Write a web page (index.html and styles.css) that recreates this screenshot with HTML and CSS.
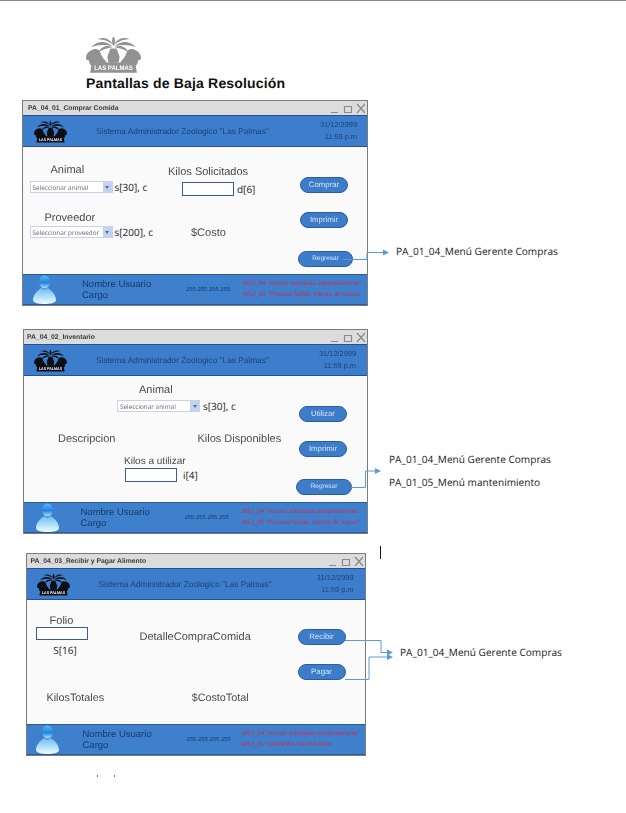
FILE: index.html
```html
<!DOCTYPE html>
<html lang="es">
<head>
    <meta charset="UTF-8">
    <meta name="viewport" content="width=device-width, initial-scale=1.0">
    <title>Pantallas de Baja Resolución</title>
    <link rel="stylesheet" href="styles.css">
</head>
<body>
    <svg width="0" height="0" class="defs">
        <defs>
            <linearGradient id="body-grad" x1="0" y1="0" x2="0" y2="1">
                <stop offset="0" stop-color="#6dbcf2"/>
                <stop offset="0.5" stop-color="#a9def9"/>
                <stop offset="1" stop-color="#f0fbff"/>
            </linearGradient>
            <linearGradient id="head-grad" x1="0" y1="0" x2="0" y2="1">
                <stop offset="0" stop-color="#62b6f2"/>
                <stop offset="0.55" stop-color="#1f84e0"/>
                <stop offset="1" stop-color="#b4e8fc"/>
            </linearGradient>
            <g id="logo-half">
                <path d="M27 9C24 3 18 0 11 3c6 0 12 2 16 6z"/>
                <path d="M26 10C20 4 11 4 5 11c7-3 14-3 21-1z"/>
                <path d="M26 11C21 8 15 10 12 16c4-3 9-4 14-5z"/>
                <path d="M0 22c0-4 2-7 5-8 2-2 6-2 8 0 2 3 2 6 5 9 2 2 3 4 3 6H5c-2-2-2-4-2-5-1 0-3-1-3-2z"/>
            </g>
            <symbol id="logo" viewBox="0 0 54 36">
                <use href="#logo-half"/>
                <use href="#logo-half" transform="matrix(-1 0 0 1 54 0)"/>
                <path d="M27 10c-2-4-2-7 0-10 2 3 2 6 0 10z"/>
                <path d="M24 12h6l3 8-1 6H22l-1-6z"/>
                <path d="M6 25c7 1 35 1 42 0l2 11H4z"/>
                <text x="27" y="33.5" text-anchor="middle" textLength="38" lengthAdjust="spacingAndGlyphs" font-family="Liberation Sans, sans-serif" font-size="6.5" font-weight="bold" fill="#fff" stroke="none">LAS PALMAS</text>
            </symbol>
            <symbol id="user" viewBox="0 0 23 29">
                <path d="M8 13C4 16 0 20 0 25c0 3 6 4 11.5 4S23 28 23 25c0-5-4-9-8-12l-3.5 2z" fill="url(#body-grad)"/>
                <ellipse cx="11.5" cy="7" rx="5.5" ry="6.5" fill="url(#head-grad)"/>
            </symbol>
        </defs>
    </svg>

    <header class="doc-head">
        <svg class="doc-logo"><use href="#logo"/></svg>
        <h1>Pantallas de Baja Resolución</h1>
    </header>

    <!-- PA_04_01 -->
    <section class="win win-1">
        <div class="win-title">
            <span>PA_04_01_Comprar Comida</span>
            <div class="win-ctrl">
                <svg width="34" height="11" viewBox="0 0 34 11"><path d="M0 9.5h7M13.5 3.5h7v6h-7zM26 1l8 9M34 1l-8 9"/></svg>
            </div>
        </div>
        <div class="win-head">
            <svg class="head-logo"><use href="#logo"/></svg>
            <p class="head-name">Sistema Administrador Zoologico "Las Palmas"</p>
            <div class="head-date"><span>31/12/2999</span><span>11:59 p.m</span></div>
        </div>
        <div class="win-body body-1">
            <div class="col-a">
                <p class="lbl lbl-animal">Animal</p>
                <div class="field"><div class="sel"><span>Seleccionar animal</span><i></i></div><span class="note">s[30], c</span></div>
                <p class="lbl lbl-prov">Proveedor</p>
                <div class="field"><div class="sel"><span>Seleccionar proveedor</span><i></i></div><span class="note">s[200], c</span></div>
            </div>
            <div class="col-b">
                <p class="lbl">Kilos Solicitados</p>
                <div class="field field-kilos"><div class="inp"></div><span class="note">d[6]</span></div>
                <p class="lbl lbl-costo">$Costo</p>
            </div>
            <div class="col-c">
                <a class="btn">Comprar</a>
                <a class="btn">Imprimir</a>
                <a class="btn btn-back">Regresar</a>
            </div>
        </div>
        <div class="win-foot">
            <svg class="foot-icon"><use href="#user"/></svg>
            <div class="foot-user"><span>Nombre Usuario</span><span>Cargo</span></div>
            <span class="foot-ip">255.255.255.255</span>
            <div class="foot-msg"><span>MSJ_04 "Accion solicitada completamente"</span><span>MSJ_05 "Proceso fallido, intente de nuevo"</span></div>
        </div>
    </section>

    <!-- PA_04_02 -->
    <section class="win win-2">
        <div class="win-title">
            <span>PA_04_02_Inventario</span>
            <div class="win-ctrl">
                <svg width="34" height="11" viewBox="0 0 34 11"><path d="M0 9.5h7M13.5 3.5h7v6h-7zM26 1l8 9M34 1l-8 9"/></svg>
            </div>
        </div>
        <div class="win-head">
            <svg class="head-logo"><use href="#logo"/></svg>
            <p class="head-name">Sistema Administrador Zoologico "Las Palmas"</p>
            <div class="head-date"><span>31/12/2999</span><span>11:59 p.m</span></div>
        </div>
        <div class="win-body body-2">
            <div class="col-main">
                <p class="lbl lbl-animal2">Animal</p>
                <div class="field field-animal2"><div class="sel"><span>Seleccionar animal</span><i></i></div><span class="note">s[30], c</span></div>
                <div class="row-desc"><p class="lbl">Descripcion</p><p class="lbl">Kilos Disponibles</p></div>
                <p class="lbl lbl-util">Kilos a utilizar</p>
                <div class="field field-util"><div class="inp"></div><span class="note">i[4]</span></div>
            </div>
            <div class="col-c">
                <a class="btn">Utilizar</a>
                <a class="btn">Imprimir</a>
                <a class="btn btn-back">Regresar</a>
            </div>
        </div>
        <div class="win-foot">
            <svg class="foot-icon"><use href="#user"/></svg>
            <div class="foot-user"><span>Nombre Usuario</span><span>Cargo</span></div>
            <span class="foot-ip">255.255.255.255</span>
            <div class="foot-msg"><span>MSJ_04 "Accion solicitada completamente"</span><span>MSJ_05 "Proceso fallido, intente de nuevo"</span></div>
        </div>
    </section>

    <!-- PA_04_03 -->
    <section class="win win-3">
        <div class="win-title">
            <span>PA_04_03_Recibir y Pagar Alimento</span>
            <div class="win-ctrl">
                <svg width="34" height="11" viewBox="0 0 34 11"><path d="M0 9.5h7M13.5 3.5h7v6h-7zM26 1l8 9M34 1l-8 9"/></svg>
            </div>
        </div>
        <div class="win-head">
            <svg class="head-logo"><use href="#logo"/></svg>
            <p class="head-name">Sistema Administrador Zoologico "Las Palmas"</p>
            <div class="head-date"><span>31/12/2999</span><span>11:59 p.m</span></div>
        </div>
        <div class="win-body body-3">
            <div class="col-main">
                <div class="row-folio">
                    <div class="folio">
                        <p class="lbl">Folio</p>
                        <div class="inp"></div>
                        <span class="note">S[16]</span>
                    </div>
                    <p class="lbl lbl-detalle">DetalleCompraComida</p>
                </div>
                <div class="row-totales"><p class="lbl">KilosTotales</p><p class="lbl">$CostoTotal</p></div>
            </div>
            <div class="col-c">
                <a class="btn">Recibir</a>
                <a class="btn">Pagar</a>
            </div>
        </div>
        <div class="win-foot">
            <svg class="foot-icon"><use href="#user"/></svg>
            <div class="foot-user"><span>Nombre Usuario</span><span>Cargo</span></div>
            <span class="foot-ip">255.255.255.255</span>
            <div class="foot-msg"><span>MSJ_04 "Accion solicitada completamente"</span><span>MSJ_11 "COMPRA YA PAGADA"</span></div>
        </div>
    </section>

    <!-- flechas hacia los menus -->
    <svg class="arrows" width="626" height="813" viewBox="0 0 626 813">
        <path d="M343 259.5h24v-7h17"/>
        <path d="M389 252.5l-6-3v6z" class="head"/>
        <path d="M351 487.5h14.5v-16.5h10"/>
        <path d="M381 471l-6-3v6z" class="head"/>
        <path d="M345 640.5h36v12h7"/>
        <path d="M393 652.5l-6-3v6z" class="head"/>
        <path d="M345 679.5h24v-22.5h19"/>
        <path d="M393 657l-6-3v6z" class="head"/>
    </svg>

    <p class="link link-1">PA_01_04_Menú Gerente Compras</p>
    <p class="link link-2">PA_01_04_Menú Gerente Compras</p>
    <p class="link link-3">PA_01_05_Menú mantenimiento</p>
    <p class="link link-4">PA_01_04_Menú Gerente Compras</p>

    <div class="cursor"></div>
    <div class="tick tick-1"></div>
    <div class="tick tick-2"></div>
</body>
</html>
```

FILE: styles.css
```css
* {
    margin: 0;
    padding: 0;
    box-sizing: border-box;
}

html, body {
    width: 626px;
    height: 813px;
    overflow: hidden;
}

body {
    position: relative;
    background-color: #fff;
    border-top: 1px solid #8a8a8a;
    font-family: "Liberation Sans", Arial, sans-serif;
    color: #444;
    text-rendering: geometricPrecision;
}

.defs {
    position: absolute;
}

.doc-head {
    height: 99px;
    padding: 35px 0 0 86px;
}

.doc-logo {
    display: block;
    width: 55px;
    height: 37px;
    fill: #929292;
    filter: blur(0.4px);
}

.doc-head h1 {
    font-size: 14px;
    line-height: 16px;
    margin-top: 2px;
    letter-spacing: 0.17px;
    color: #111;
}

/* ventana */
.win {
    display: flex;
    flex-direction: column;
    border: 1px solid #7b7b7b;
    border-width: 1px 1.5px;
}

.win-1 {
    width: 346px;
    height: 206px;
    margin-left: 22px;
}

.win-2 {
    width: 345px;
    height: 205px;
    margin: 23px 0 0 23px;
}

.win-3 {
    width: 340px;
    height: 203px;
    margin: 19px 0 0 25.5px;
}

.win-title, .win-head, .win-foot, .lbl, .sel, .btn {
    filter: blur(0.3px);
}

.win-title {
    flex: none;
    height: 14px;
    display: flex;
    justify-content: space-between;
    align-items: center;
    padding: 0 2px 0 5px;
    background-color: #dcdcdc;
    font-size: 6.8px;
    font-weight: bold;
    color: #3a3a3a;
}

.win-2 .win-title {
    padding-left: 3px;
}

.win-3 .win-title {
    padding-left: 4px;
}

.win-ctrl svg {
    display: block;
    fill: none;
    stroke: #8a8a8a;
    stroke-width: 1.2;
}

.win-head {
    flex: none;
    height: 32px;
    display: flex;
    align-items: center;
    padding: 0 10px 0 11px;
    background-color: #3c7ecb;
    border: 1px solid #2a4f9a;
    border-width: 1px 0;
}

.win-2 .win-head, .win-3 .win-head {
    padding: 0 11px 0 10px;
}

.head-logo {
    flex: none;
    width: 33px;
    height: 25px;
    fill: #0d0d12;
}

.head-name {
    margin-left: 29px;
    font-size: 8.3px;
    color: #1b4274;
    white-space: nowrap;
}

.head-date {
    margin-left: auto;
    display: flex;
    flex-direction: column;
    align-items: flex-end;
    gap: 4.5px;
    font-size: 7.4px;
    line-height: 8px;
    color: #1b4274;
}

.win-body {
    flex: 1;
    display: flex;
    background-color: #fafafa;
}

.win-foot {
    flex: none;
    height: 31px;
    display: flex;
    align-items: center;
    padding: 0 0 0 10px;
    background-color: #3f80cc;
    border: 1px solid #2a5aa0;
    border-width: 1px 0 1.5px;
}

.win-2 .win-foot {
    padding-left: 11.5px;
}

.win-3 .win-foot {
    padding-left: 9px;
}

.foot-icon {
    flex: none;
    width: 23px;
    height: 29px;
}

.foot-user {
    width: 104px;
    margin-left: 26px;
    padding-top: 2px;
    display: flex;
    flex-direction: column;
    gap: 1.5px;
    font-size: 9.5px;
    line-height: 10px;
    color: #17396a;
}

.win-2 .foot-user {
    margin-left: 22px;
}

.win-3 .foot-user {
    margin-left: 24px;
}

.foot-ip {
    width: 57px;
    font-size: 5.9px;
    color: #17396a;
}

.win-3 .foot-ip {
    width: 55px;
}

.foot-msg {
    display: flex;
    flex-direction: column;
    gap: 3.5px;
    padding-bottom: 1px;
    font-size: 6.2px;
    line-height: 7px;
    white-space: nowrap;
    color: #cc2d4a;
}

/* controles */
.lbl {
    font-size: 11px;
    line-height: 15px;
    margin-bottom: -2px;
    color: #4a4a4a;
    white-space: nowrap;
}

.note {
    font-family: "Open Sans", sans-serif;
    font-size: 10px;
    line-height: 12px;
    color: #222;
    white-space: nowrap;
}

.field {
    display: flex;
    align-items: center;
    gap: 2px;
}

.sel {
    flex: none;
    width: 83px;
    height: 12px;
    display: flex;
    align-items: center;
    justify-content: space-between;
    padding-left: 2px;
    background-color: #fff;
    border: 1px solid #c6d3ea;
    font-family: "Open Sans", sans-serif;
    font-size: 6.4px;
    color: #666;
}

.sel i {
    width: 9px;
    height: 10px;
    background: #c5d4ee;
    position: relative;
}

.sel i::after {
    content: "";
    position: absolute;
    left: 2.5px;
    top: 4px;
    border: 2px solid transparent;
    border-top: 3px solid #4e6ea8;
}

.inp {
    flex: none;
    width: 52px;
    height: 14px;
    background-color: #fff;
    border: 1.5px solid #3d5a9c;
}

.btn {
    display: block;
    width: 48px;
    height: 16px;
    line-height: 13px;
    text-align: center;
    background-color: #3d7cc9;
    border: 1.5px solid #2c5ca8;
    border-radius: 8px;
    font-size: 7.8px;
    color: #d6e5f6;
}

.btn-back {
    width: 55px;
    font-size: 6.5px;
}

.col-c {
    display: flex;
    flex-direction: column;
    align-items: flex-start;
}

/* pantalla 1 */
.col-a {
    width: 145px;
    padding: 16px 0 0 6.5px;
}

.lbl-animal {
    width: 75px;
    padding-left: 21px;
    margin-bottom: 3px;
}

.lbl-prov {
    padding-left: 15px;
    margin: 18px 0 0;
}

.col-b {
    width: 132px;
    padding-top: 18px;
}

.field-kilos {
    margin: 4px 0 0 14px;
    gap: 3px;
}

.lbl-costo {
    margin: 30px 0 0 23px;
}

.body-1 .col-c {
    padding-top: 30px;
    gap: 19px;
}

.body-1 .btn-back {
    margin: 4px 0 0 -2px;
}

/* pantalla 2 */
.col-main {
    width: 275px;
}

.body-2 .col-c {
    padding-top: 30px;
    gap: 19px;
}

.body-2 .btn-back {
    width: 56px;
    margin: 3px 0 0 -3px;
}

.lbl-animal2 {
    padding: 7px 0 0 115px;
}

.field-animal2 {
    margin: 4px 0 0 93px;
    gap: 3px;
}

.row-desc {
    display: flex;
    gap: 82px;
    padding: 20px 0 0 34px;
}

.lbl-util {
    padding: 11px 0 0 100px;
    font-size: 10px;
    line-height: 12px;
    margin-bottom: 0;
}

.field-util {
    margin: 0 0 0 101px;
    gap: 6px;
}

/* pantalla 3 */
.body-3 .col-main {
    width: 271px;
}

.body-3 .col-c {
    padding-top: 29px;
    gap: 19px;
}

.row-folio {
    display: flex;
    align-items: flex-start;
    padding: 14px 0 0 9px;
}

.folio {
    display: flex;
    flex-direction: column;
    align-items: center;
    width: 52px;
}

.folio .inp {
    height: 13px;
}

.folio .note {
    margin: 4px 0 0 7px;
}

.lbl-detalle {
    margin: 16px 0 0 52px;
}

.row-totales {
    display: flex;
    gap: 87.5px;
    padding: 35px 0 0 20px;
}

.row-totales .lbl {
    font-size: 10.8px;
}

/* flechas y textos sueltos sobre el lienzo */
.arrows {
    position: absolute;
    left: 0;
    top: -1px;
    fill: none;
    stroke: #5b9bd5;
    stroke-width: 1;
}

.arrows .head {
    fill: #5b9bd5;
    stroke: none;
}

.link {
    position: absolute;
    font-family: "Open Sans", sans-serif;
    font-size: 10.1px;
    line-height: 14px;
    color: #222;
    white-space: nowrap;
}

.link-1 { left: 396px; top: 243px; }
.link-2 { left: 389px; top: 451px; }
.link-3 { left: 389px; top: 474px; }
.link-4 { left: 400px; top: 644px; }

.cursor {
    position: absolute;
    left: 380px;
    top: 545px;
    width: 1px;
    height: 13px;
    background-color: #111;
}

.tick {
    position: absolute;
    top: 774px;
    width: 1px;
    height: 2px;
    background-color: #777;
}

.tick-1 { left: 97px; }
.tick-2 { left: 114px; }
```
